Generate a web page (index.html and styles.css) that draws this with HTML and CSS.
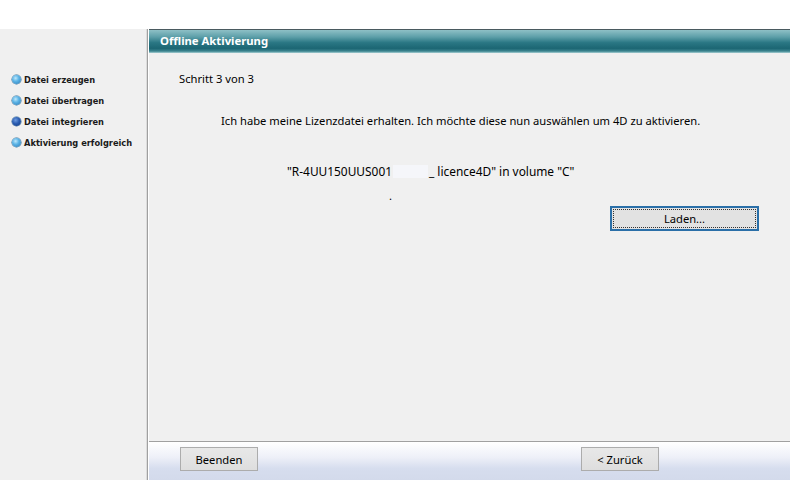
FILE: index.html
```html
<!DOCTYPE html>
<html>
<head>
<meta charset="utf-8">
<link rel="stylesheet" href="styles.css">
</head>
<body>
<div class="top"></div>
<div class="main">
  <div class="side">
    <ul class="steps">
      <li class="step"><span class="dot"></span>Datei erzeugen</li>
      <li class="step"><span class="dot"></span>Datei übertragen</li>
      <li class="step"><span class="dot active"></span>Datei integrieren</li>
      <li class="step"><span class="dot"></span>Aktivierung erfolgreich</li>
    </ul>
  </div>
  <div class="content">
    <div class="header">Offline Aktivierung</div>
    <div class="body">
      <div class="schritt">Schritt 3 von 3</div>
      <div class="intro">Ich habe meine Lizenzdatei erhalten. Ich möchte diese nun auswählen um 4D zu aktivieren.</div>
      <div class="file">"R-4UU150UUS001<span class="blur"></span>_ licence4D" in volume "C"</div>
      <div class="dotline">.</div>
      <div class="loadrow"><button class="btn focus"><span class="inner">Laden...</span></button></div>
    </div>
    <div class="footer">
      <button class="btn beenden">Beenden</button>
      <button class="btn zurueck">&lt; Zurück</button>
    </div>
  </div>
</div>
</body>
</html>
```
FILE: styles.css
```css
html, body {
  margin: 0;
  padding: 0;
  background: #ffffff;
  font-family: "Noto Sans", "Open Sans", sans-serif;
  font-size: 11.2px;
  color: #000;
}
.top {
  height: 29px;
  background: #ffffff;
}
.main {
  display: flex;
  height: 451px;
}
.side {
  width: 147px;
  background: #f0f0f0;
  border-right: 1px solid #a0a0a0;
  box-shadow: inset -1px 0 0 #dcdcdc;
}
.steps {
  list-style: none;
  margin: 0;
  padding: 40px 0 0 12px;
}
.step {
  display: flex;
  align-items: center;
  height: 21px;
  font-family: "DejaVu Sans Condensed", "DejaVu Sans", sans-serif;
  font-stretch: condensed;
  font-weight: bold;
  font-size: 9.2px;
  color: #1a1a1a;
}
.dot {
  width: 9px;
  height: 9px;
  border-radius: 50%;
  margin-right: 3px;
  background: radial-gradient(circle at 40% 35%, #bfe8fb 0%, #5cb4e6 40%, #2a78b4 100%);
  box-shadow: 0 0 0 0.5px #3a6f96;
}
.dot.active {
  background: radial-gradient(circle at 40% 35%, #6d9be0 0%, #2a5cb0 45%, #143c80 100%);
}
.content {
  flex: 1;
  display: flex;
  flex-direction: column;
  border-left: 1px solid #ffffff;
}
.header {
  height: 23px;
  border-top: 1px solid #4a5a60;
  background: linear-gradient(#8ec0c6 0%, #5d9fa9 30%, #2a7784 55%, #1c6673 80%, #3d8590 92%, #a8d0d4 100%);
  color: #ffffff;
  font-weight: bold;
  font-size: 11.3px;
  line-height: 21px;
  padding-left: 11px;
}
.body {
  flex: 1;
  background: #f0f0f0;
  padding-top: 17px;
}
.schritt {
  margin-left: 30px;
  line-height: 17px;
}
.intro {
  margin-left: 72px;
  margin-top: 25px;
  line-height: 17px;
}
.file {
  margin-left: 138px;
  margin-top: 34px;
  line-height: 17px;
  font-size: 11.9px;
}
.blur {
  display: inline-block;
  width: 35px;
  height: 13px;
  vertical-align: -2px;
  background: #f5f6fa;
  margin-left: 1px;
  margin-right: 1px;
}
.dotline {
  margin-left: 240px;
  margin-top: 12px;
  line-height: 8px;
  height: 8px;
}
.loadrow {
  margin-top: 6px;
  padding-left: 461px;
}
.btn {
  font-family: "Noto Sans", "Open Sans", sans-serif;
  font-size: 11.2px;
  color: #000;
  background: linear-gradient(#e8e8e8, #dedede);
  border: 1px solid #acacac;
  height: 24px;
  padding: 0;
  margin: 0;
}
.btn.focus {
  width: 149px;
  height: 25px;
  border: 2px solid #2a6fa8;
  padding: 1px;
  background: #e2e2e2;
}
.btn.focus .inner {
  display: block;
  height: 17px;
  line-height: 17px;
  border: 1px dotted #333;
}
.footer {
  border-top: 1px solid #a0a0a0;
  background: linear-gradient(#ffffff 0%, #eef0f8 40%, #d6ddee 70%, #d3daeb 100%);
  display: flex;
  align-items: flex-start;
  padding-top: 5px;
  box-sizing: border-box;
  height: 39px;
}
.btn.beenden {
  width: 78px;
  margin-left: 31px;
}
.btn.zurueck {
  width: 78px;
  margin-left: 323px;
}
```
